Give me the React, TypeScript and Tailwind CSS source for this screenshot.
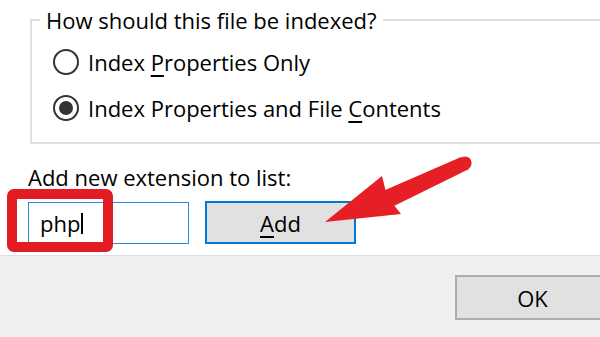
const RadioRow = ({ checked, children }: { checked?: boolean; children: React.ReactNode }) => (
  <label className="flex items-center gap-[9px] h-[30px]">
    <span className="w-[26px] h-[26px] rounded-full border-2 border-[#333333] bg-white flex items-center justify-center shrink-0">
      {checked && <span className="w-[14px] h-[14px] rounded-full bg-[#333333]" />}
    </span>
    <span>{children}</span>
  </label>
);

export default function App() {
  return (
    <div className="relative w-[600px] h-[337px] overflow-hidden bg-[#f0f0f0] text-black text-[22px] leading-[28px] font-['Open_Sans','Noto_Sans',sans-serif]">
      {/* Dialog body */}
      <div className="h-[256px] bg-white border-b border-[#dfdfdf] pt-[6px]">
        <fieldset className="ml-[30px] w-[600px] border-2 border-[#dfdfdf] pl-[8px] pb-[19px]">
          <legend className="px-[6px]">How should this file be indexed?</legend>
          <div className="flex flex-col gap-[16px] mt-[13px] ml-[13px]">
            <RadioRow>
              Index <span className="underline underline-offset-4">P</span>roperties Only
            </RadioRow>
            <RadioRow checked>
              Index Properties and File <span className="underline underline-offset-4">C</span>ontents
            </RadioRow>
          </div>
        </fieldset>

        <div className="ml-[28px] mt-[19px]">
          <p>Add new extension to list:</p>
          <div className="flex items-start gap-[16px] mt-[10px]">
            <div className="w-[161px] h-[42px] mt-[1px] border border-[#2f88dd] bg-white flex items-center pl-[11px]">
              <span>php</span>
              <span className="w-[2px] h-[21px] bg-black ml-[1px]" />
            </div>
            <button className="w-[151px] h-[43px] border-2 border-[#0078d7] bg-[#e1e1e1] flex items-center justify-center">
              <span>
                <span className="underline underline-offset-4">A</span>dd
              </span>
            </button>
          </div>
        </div>
      </div>

      {/* Footer */}
      <div className="pt-[19px]">
        <button className="ml-[455px] w-[155px] h-[45px] border-2 border-[#adadad] bg-[#e1e1e1] flex items-center justify-center shrink-0">
          OK
        </button>
      </div>

      {/* Annotations */}
      <div className="absolute left-[7px] top-[189px] w-[106px] h-[63px] border-[10px] border-[#e31c24] rounded-[7px]" />
      <svg className="absolute inset-0 pointer-events-none" width="600" height="337" viewBox="0 0 600 337">
        <polygon points="325,222 382,176 386,192 393,204 401,214" fill="#e61e25" />
        <polygon points="383,191 461,157 469,169 394,206" fill="#e61e25" />
        <circle cx="465" cy="163" r="6.6" fill="#e61e25" />
      </svg>
    </div>
  );
}
